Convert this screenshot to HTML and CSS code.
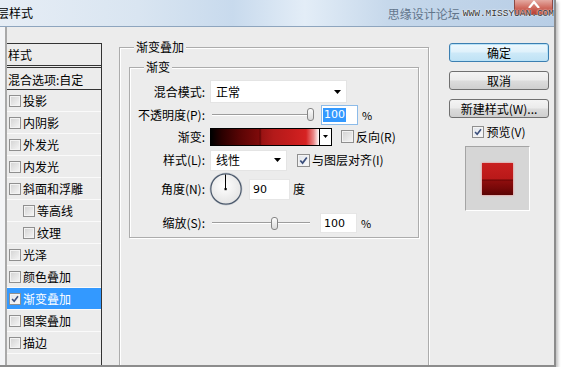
FILE: index.html
```html
<!DOCTYPE html>
<html lang="zh-CN">
<head>
<meta charset="UTF-8">
<meta name="viewport" content="width=device-width, initial-scale=1.0">
<title>图层样式</title>
<link rel="stylesheet" href="styles.css">
</head>
<body>
<div class="window">
    <div class="titlebar">
        <span class="title">层样式</span>
        <span class="closeBtn">
            <svg width="12" height="8" viewBox="0 0 12 8"><path d="M1 8 L6 2 L11 8" fill="none" stroke="#fff" stroke-width="2.2"/></svg>
        </span>
        <span class="mark">思缘设计论坛<span class="url">WWW.MISSYUAN.COM</span></span>
    </div>

    <div class="content">
        <!-- effects list -->
        <ul class="fxList">
            <li class="fxHead">样式</li>
            <li class="fxBlend">混合选项:自定</li>
            <li><span class="cb"></span>投影</li>
            <li><span class="cb"></span>内阴影</li>
            <li><span class="cb"></span>外发光</li>
            <li><span class="cb"></span>内发光</li>
            <li><span class="cb"></span>斜面和浮雕</li>
            <li class="sub"><span class="cb"></span>等高线</li>
            <li class="sub"><span class="cb"></span>纹理</li>
            <li><span class="cb"></span>光泽</li>
            <li><span class="cb"></span>颜色叠加</li>
            <li class="active"><span class="cb on"><svg viewBox="0 0 12 12"><path d="M2.5 6 L5 8.8 L9.6 2.8" fill="none" stroke="#3b4f7c" stroke-width="1.9"/></svg></span>渐变叠加</li>
            <li><span class="cb"></span>图案叠加</li>
            <li><span class="cb"></span>描边</li>
        </ul>

        <fieldset class="group outer">
            <legend>渐变叠加</legend>
            <fieldset class="group inner">
                <legend>渐变</legend>

                <div class="row r1">
                    <span class="lbl">混合模式:</span>
                    <div class="dropdown wide">正常<svg class="arrow" width="7" height="4" viewBox="0 0 7 4"><path d="M0 0h7L3.5 4z"/></svg></div>
                </div>

                <div class="row r2">
                    <span class="lbl">不透明度(P):</span>
                    <div class="slider">
                        <span class="track" style="width:95px"></span><span class="thumb"></span>
                    </div>
                    <div class="num focus op"><span class="sel">100</span></div>
                    <span class="unit">%</span>
                </div>

                <div class="row r3">
                    <span class="lbl">渐变:</span>
                    <div class="gradBox">
                        <span class="gradSwatch"></span>
                        <span class="gradArrow"><svg width="5" height="3" viewBox="0 0 5 3"><path d="M0 0h5L2.5 3z"/></svg></span>
                    </div>
                    <span class="cb chk"></span><span class="cbText">反向(R)</span>
                </div>

                <div class="row r4">
                    <span class="lbl">样式(L):</span>
                    <div class="dropdown short">线性<svg class="arrow" width="7" height="4" viewBox="0 0 7 4"><path d="M0 0h7L3.5 4z"/></svg></div>
                    <span class="cb chk on"><svg viewBox="0 0 12 12"><path d="M2.5 6 L5 8.8 L9.6 2.8" fill="none" stroke="#3b4f7c" stroke-width="1.9"/></svg></span><span class="cbText">与图层对齐(I)</span>
                </div>

                <div class="row r5">
                    <span class="lbl">角度(N):</span>
                    <svg class="dial" width="34" height="34" viewBox="0 0 34 34">
                        <defs>
                            <radialGradient id="dialFill" cx="45%" cy="40%" r="65%">
                                <stop offset="0" stop-color="#ffffff"/>
                                <stop offset="1" stop-color="#e2e2e2"/>
                            </radialGradient>
                        </defs>
                        <circle cx="17" cy="17" r="16.2" fill="none" stroke="#cfd3d8" stroke-width="1"/>
                        <circle cx="17" cy="17" r="15.2" fill="url(#dialFill)" stroke="#4a586b" stroke-width="1.2"/>
                        <line x1="16.5" y1="17" x2="16.5" y2="2.5" stroke="#000" stroke-width="1"/>
                        <rect x="15.5" y="16" width="2.2" height="2.2" fill="#000"/>
                    </svg>
                    <div class="num ang">90</div>
                    <span class="unit deg">度</span>
                </div>

                <div class="row r6">
                    <span class="lbl">缩放(S):</span>
                    <div class="slider">
                        <span class="track" style="width:59px"></span><span class="thumb"></span><span class="track" style="width:32px"></span>
                    </div>
                    <div class="num sc">100</div>
                    <span class="unit">%</span>
                </div>
            </fieldset>
        </fieldset>

        <div class="side">
            <button class="btn default">确定</button>
            <button class="btn">取消</button>
            <button class="btn">新建样式(W)...</button>
            <div class="previewToggle">
                <span class="cb chk on"><svg viewBox="0 0 12 12"><path d="M2.5 6 L5 8.8 L9.6 2.8" fill="none" stroke="#3b4f7c" stroke-width="1.9"/></svg></span><span class="cbText">预览(V)</span>
            </div>
            <div class="preview"><div class="previewSwatch"></div></div>
        </div>
    </div>
</div>
</body>
</html>
```

FILE: styles.css
```css
/* Layer style dialog */
* {
    box-sizing: border-box;
}

body {
    margin: 0;
    background: #fff;
    font: 12px/16px "Noto Sans CJK SC", "DejaVu Sans", sans-serif;
    color: #000;
}

.window {
    width: 556px;
    height: 367px;
    background: #f4f5f7;
    border-right: 2px solid #8c8c8c;
    border-bottom: 2px solid #8c8c8c;
    box-shadow: 2px 2px 3px rgba(0, 0, 0, 0.25);
    overflow: hidden;
}

/* title bar */
.titlebar {
    position: relative;
    display: flex;
    align-items: center;
    height: 27px;
    border-bottom: 1px solid #8ea5be;
    background: linear-gradient(to right, #e6edf5 0%, #d9e5f1 25%, #c8daed 42%, #e3edf7 55%, #c6d8eb 70%, #b8cee6 100%);
}

.title {
    margin-left: -3px;
}

.closeBtn {
    position: absolute;
    right: 1px;
    top: 0;
    width: 39px;
    height: 15px;
    display: flex;
    justify-content: center;
    align-items: flex-start;
    border: 1px solid #8b4a44;
    border-top: none;
    border-radius: 0 0 4px 4px;
    background: linear-gradient(#e4aaa2, #cf6a5e 55%, #b83b30);
}

.mark {
    position: relative;
    margin-left: auto;
    display: flex;
    align-items: center;
    color: #62758b;
    padding-top: 1px;
}

.url {
    margin-left: 3px;
    font: 9.5px "Liberation Mono", monospace;
    color: #333;
    text-shadow: 0 0 2px #fff, 0 0 1px #fff;
}

/* body of the dialog */
.content {
    display: flex;
    align-items: flex-start;
    height: 338px;
    margin-left: 5px;
    border-left: 2px solid #a9a9a9;
    background: #ececec;
    overflow: hidden;
}

.fxList {
    align-self: stretch;
    width: 95px;
    margin: 16px 0 0 0;
    padding: 0;
    list-style: none;
    border-top: 1px solid #333;
    border-right: 1px solid #333;
}

.fxList li {
    display: flex;
    align-items: center;
    height: 22px;
    padding-left: 2px;
    border-bottom: 1px solid #fafafa;
}

.fxList li.fxHead {
    height: 24px;
    padding-left: 1px;
    border-bottom: 3px double #333;
}

.fxList li.fxBlend {
    padding: 2px 0 0 1px;
    border-bottom: 1px solid #333;
}

.fxList li.sub {
    padding-left: 16px;
}

.fxList li.active {
    background: #3399ff;
    color: #fff;
}

.fxList .cb {
    width: 12px;
    height: 12px;
    margin-right: 2px;
}

/* checkboxes */
.cb {
    display: inline-flex;
    flex: none;
    width: 13px;
    height: 13px;
    border: 1px solid #8f8f8f;
    background: linear-gradient(135deg, #d2d2d2, #f6f6f6);
    box-shadow: inset 0 0 0 1px #f3f3f3;
}

.cb svg {
    width: 100%;
    height: 100%;
}

.cb.on {
    background: linear-gradient(135deg, #dfe3ea, #fbfbfb);
}

.cbText {
    margin-left: 2px;
}

/* group boxes */
.group {
    margin: 0;
    min-width: 0;
    border: 1px solid #acacac;
    box-shadow: 1px 1px 0 #fff, inset 1px 1px 0 #fff;
}

.group legend {
    padding: 0 2px;
    line-height: 16px;
    background: #ececec;
}

.outer {
    flex: none;
    width: 310px;
    height: 340px;
    margin: 12px 0 0 17px;
    padding: 4px 9px 0 9px;
}

.outer > legend {
    margin-left: 5px;
}

.inner {
    padding: 5px 0 3px 0;
}

.inner > legend {
    margin-left: 14px;
}

.row {
    display: flex;
    align-items: center;
}

.r1 { height: 23px; }
.r2 { height: 21px; margin-top: 1px; }
.r3 { height: 19px; margin-top: 2px; }
.r4 { height: 22px; margin-top: 3px; }
.r5 { height: 34px; margin-top: 1px; }
.r6 { height: 22px; margin-top: 6px; }

.lbl {
    width: 75px;
    margin-right: 5px;
    text-align: right;
    white-space: nowrap;
}

.dropdown {
    display: flex;
    align-items: center;
    justify-content: space-between;
    padding: 0 5px 0 5px;
    background: #fff;
    border: 1px solid #e4e4e4;
}

.dropdown.wide {
    width: 137px;
    height: 23px;
}

.dropdown.short {
    width: 77px;
    height: 21px;
}

.slider {
    display: flex;
    align-items: center;
    margin-left: 2px;
}

.track {
    height: 2px;
    border-top: 1px solid #9d9d9d;
    background: #fff;
}

.thumb {
    width: 7px;
    height: 13px;
    border: 1px solid #858585;
    border-radius: 3px;
    background: linear-gradient(#fdfdfd, #dadada);
}

.num {
    display: flex;
    align-items: center;
    height: 20px;
    padding-left: 3px;
    background: #fff;
    border: 1px solid #e6e6e6;
    font: 11px "DejaVu Sans", sans-serif;
}

.num.focus {
    border-color: #8cbbe9;
}

.num .sel {
    background: #3399ff;
    color: #fff;
    padding: 0 1px;
    line-height: 14px;
}

.op {
    width: 37px;
    margin-left: 7px;
    padding-left: 1px;
}

.sc {
    width: 37px;
    margin-left: 10px;
}

.ang {
    width: 41px;
    height: 21px;
    margin-left: 6px;
}

.unit {
    margin-left: 4px;
    font-size: 11px;
}

.unit.deg {
    margin-left: 3px;
    font-size: 12px;
}

.gradBox {
    display: flex;
    width: 122px;
    height: 18px;
    border: 1px solid #000;
}

.gradSwatch {
    flex: 1;
    background: linear-gradient(to right, #000 0%, #2a0000 10%, #5c0505 28%, #7d0a0a 44%, #650606 45.5%, #9a1313 47%, #b31a1a 58%, #c61d1d 75%, #d62222 88%, #eb8a8a 95%, #fff 100%);
}

.gradArrow {
    display: flex;
    align-items: center;
    justify-content: center;
    width: 12px;
    border-left: 1px solid #000;
    background: #fff;
}

.chk {
    margin-left: 9px;
}

.r4 .chk {
    margin-left: 10px;
}

.dial {
    margin-left: -1px;
}

/* right column */
.side {
    flex: none;
    width: 100px;
    margin: 16px 0 0 20px;
}

.btn {
    display: block;
    width: 100px;
    height: 19px;
    margin: 0 0 9px 0;
    padding: 0;
    font: inherit;
    line-height: 16px;
    color: #000;
    border: 1px solid #707070;
    border-radius: 3px;
    background: linear-gradient(#f4f4f4, #ebebeb 48%, #dcdcdc 52%, #cfcfcf);
}

.btn.default {
    border-color: #3c7fb1;
    background: linear-gradient(#eef8fd, #dff1fb 48%, #cde9f8 52%, #bfe2f5);
    box-shadow: inset 0 0 0 1px #b9e2f7;
}

.previewToggle {
    display: flex;
    justify-content: center;
    align-items: center;
    height: 14px;
    margin-top: -2px;
}

.previewToggle .chk {
    margin-left: 0;
    width: 12px;
    height: 12px;
}

.preview {
    display: flex;
    align-items: center;
    justify-content: center;
    width: 65px;
    height: 65px;
    margin: 7px 0 0 16px;
    background: #d6d6d6;
    border: 1px solid;
    border-color: #a4a4a4 #fff #fff #a4a4a4;
}

.previewSwatch {
    width: 31px;
    height: 32px;
    background: linear-gradient(#c91f1f 0%, #b91919 50%, #6e0606 53%, #8c0d0d 58%, #760808 80%, #5a0404 100%);
    box-shadow: 0 0 2px rgba(255, 80, 80, 0.7);
}
```
